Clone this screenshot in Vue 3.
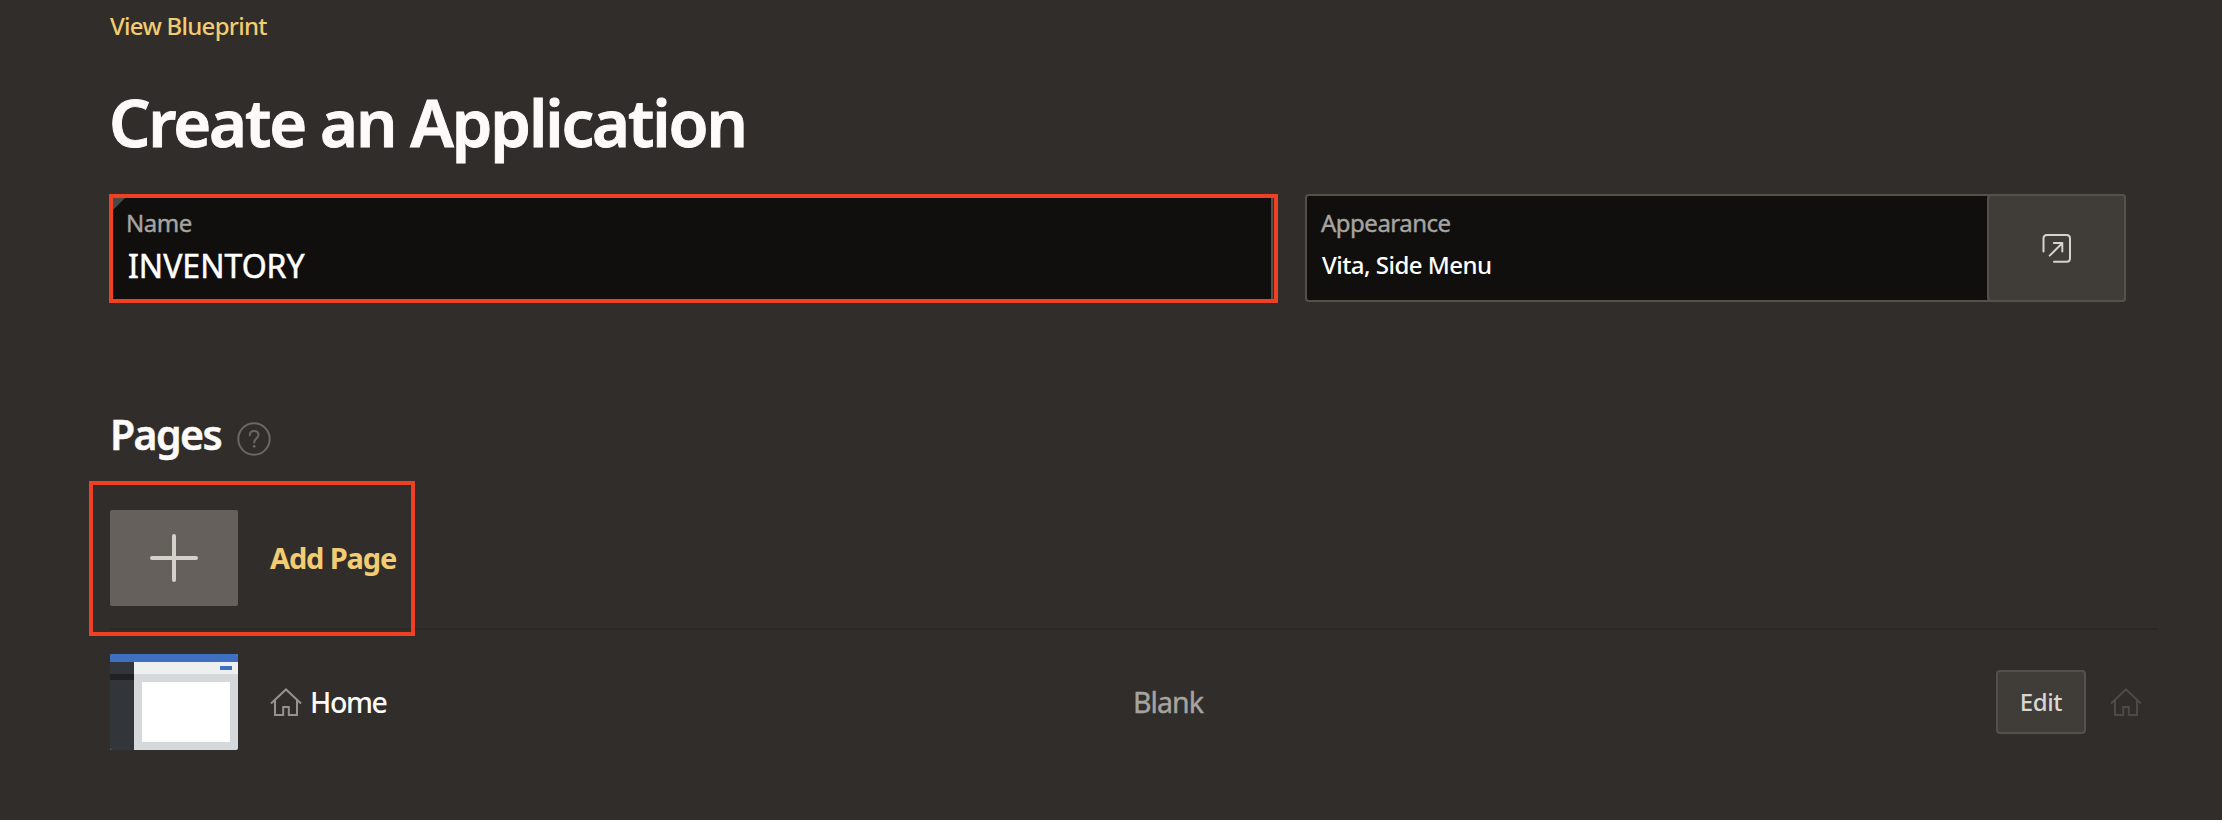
<script setup>
const house = 'M1 15.5 L16 1.4 L31 15.5 M5 12.3 V27 H13.2 V19 H18.8 V27 H27 V12.3'
</script>

<template>
  <main class="wizard">
    <a class="blueprint">View Blueprint</a>
    <h1 class="title">Create an Application</h1>

    <section class="fields">
      <div class="field name">
        <label class="label">Name</label>
        <div class="value big">INVENTORY</div>
        <i class="corner"></i>
        <i class="mark mark-name"></i>
      </div>
      <div class="field appearance">
        <div class="text">
          <label class="label app-label">Appearance</label>
          <div class="value">Vita, Side Menu</div>
        </div>
        <button class="open" aria-label="Set appearance">
          <svg width="30" height="30" viewBox="0 0 30 30" fill="none" stroke="#d5d3cf" stroke-width="2" stroke-linecap="round" stroke-linejoin="round">
            <path d="M1.5 18.5 V5.5 Q1.5 2 5 2 H24.5 Q28 2 28 5.5 V25.2 Q28 28.7 24.5 28.7 H12" />
            <path d="M7.7 22.6 L20.2 10.2 M11.8 10 H20.3 V18.6" />
          </svg>
        </button>
      </div>
    </section>

    <div class="heading">
      <h2 class="pages">Pages</h2>
      <svg class="help" width="34" height="34" viewBox="0 0 34 34" fill="none" stroke="#6b6763" stroke-width="2">
        <circle cx="17" cy="17" r="15.7" />
        <path d="M12.8 13.2 C13 7.8 21.3 7.6 21.5 13 C21.6 16.5 17.2 16.3 17.2 20.4" stroke-linecap="round" />
        <circle cx="17.2" cy="24.3" r="1.4" fill="#6b6763" stroke="none" />
      </svg>
    </div>

    <div class="row add">
      <div class="thumb plus">
        <svg width="48" height="48" viewBox="0 0 48 48" stroke="#d4d0ca" stroke-width="4" stroke-linecap="round">
          <path d="M24 2 V46 M2 24 H46" />
        </svg>
      </div>
      <a class="add-text">Add Page</a>
      <i class="mark mark-add"></i>
    </div>

    <div class="row home">
      <svg class="thumb" width="128" height="96" viewBox="0 0 128 96" shape-rendering="crispEdges">
        <rect width="128" height="96" fill="#d5d9dc" />
        <rect width="24" height="96" fill="#32363b" />
        <rect y="20" width="24" height="6" fill="#1f2122" />
        <rect x="24" y="8" width="104" height="12" fill="#eef0f0" />
        <rect width="128" height="8" fill="#3f6fc3" />
        <rect x="110" y="12" width="12" height="4" fill="#3f6fc3" />
        <rect x="32" y="28" width="88" height="60" fill="#fff" />
      </svg>
      <svg class="house" width="32" height="28" viewBox="0 0 32 28" fill="none" stroke="#959390" stroke-width="2"><path :d="house" /></svg>
      <span class="page-name">Home</span>
      <span class="page-type">Blank</span>
      <button class="edit">Edit</button>
      <svg class="house-end" width="32" height="28" viewBox="0 0 32 28" fill="none" stroke="#4d4a47" stroke-width="2"><path :d="house" /></svg>
    </div>
  </main>
</template>

<style>
body { background: #312d2a; }
</style>

<style scoped>
* { box-sizing: border-box; }
.wizard {
  height: 820px;
  padding: 0 64px 0 110px;
  overflow: hidden;
  background: #312d2a;
  color: #fcfbfa;
  font-family: "Noto Sans", "Open Sans", sans-serif;
}
.blueprint {
  display: block;
  line-height: 51px;
  font-size: 24px;
  font-weight: 500;
  letter-spacing: -0.72px;
  color: #f1cc73;
}
.title {
  margin: 21px 0 22px -1px;
  line-height: 100px;
  font-size: 65px;
  font-weight: 600;
  letter-spacing: -2.1px;
  -webkit-text-stroke: 0.9px currentColor;
}
.fields { display: flex; gap: 32px; height: 108px; }
.field { position: relative; border: 2px solid #54504b; border-radius: 4px; background: #100f0d; }
.name { width: 1163px; padding: 8px 0 0 14px; }
.appearance { display: flex; width: 821px; }
.text { flex: 1; padding: 8px 0 0 14px; }
.label {
  display: block;
  line-height: 37px;
  font-size: 24px;
  letter-spacing: -0.5px;
  color: #a6a4a1;
  -webkit-text-stroke: 0.4px currentColor;
}
.app-label { letter-spacing: -0.5px; }
.value {
  padding-left: 1px;
  line-height: 47px;
  font-size: 24px;
  font-weight: 500;
  letter-spacing: -0.53px;
  color: #fff;
}
.big {
  padding-left: 2px;
  line-height: 49px;
  font-size: 32px;
  font-weight: 400;
  letter-spacing: 0;
  -webkit-text-stroke: 0.5px currentColor;
}
.corner {
  position: absolute;
  left: 0;
  top: 0;
  border-top: 15px solid #4a4946;
  border-right: 15px solid transparent;
}
.mark { position: absolute; border: 4px solid #ee4023; }
.mark-name { left: -3px; top: -2px; width: 1169px; height: 109px; }
.open {
  display: flex;
  align-items: center;
  justify-content: center;
  width: 139px;
  margin: -2px -2px -2px 0;
  padding: 0;
  border: 2px solid #54504b;
  border-radius: 4px;
  background: #403c37;
}
.heading { display: flex; align-items: flex-start; margin-top: 102px; height: 102px; }
.pages {
  width: 110px;
  margin: 0;
  line-height: 60px;
  font-size: 41px;
  font-weight: 600;
  letter-spacing: -1.6px;
  white-space: nowrap;
  -webkit-text-stroke: 0.5px currentColor;
}
.help { margin: 18px 0 0 17px; }
.row { position: relative; display: flex; align-items: center; }
.add { width: 2048px; height: 120px; margin-top: 4px; padding-bottom: 22px; border-bottom: 2px solid #2c2826; }
.thumb { width: 128px; height: 96px; border-radius: 2px; flex: none; }
.plus { display: flex; align-items: center; justify-content: center; background: #65605b; }
.add-text {
  margin-left: 32px;
  line-height: 40px;
  font-size: 29px;
  font-weight: 700;
  letter-spacing: -1.14px;
  color: #f1cc73;
}
.mark-add { left: -21px; top: -29px; width: 326px; height: 155px; }
.home { width: 2048px; margin-top: 24px; }
.house { margin-left: 32px; }
.page-name, .page-type { font-size: 28.5px; line-height: 40px; }
.page-name { width: 823px; margin-left: 8px; font-weight: 500; letter-spacing: -1.4px; }
.page-type { letter-spacing: -0.95px; color: #a6a4a1; -webkit-text-stroke: 0.4px currentColor; }
.edit {
  width: 90px;
  height: 64px;
  margin-left: auto;
  padding: 0;
  border: 2px solid #54504b;
  border-radius: 4px;
  background: #403c37;
  color: #d8d6d2;
  font: 500 24px/36px "Noto Sans", sans-serif;
  letter-spacing: -0.4px;
}
.house-end { margin: 0 16px 0 24px; }
</style>
